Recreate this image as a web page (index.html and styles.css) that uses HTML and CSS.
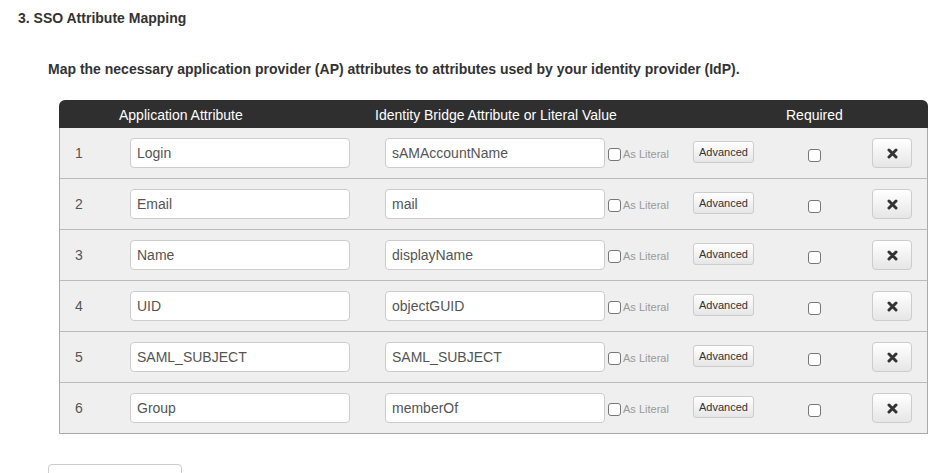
FILE: index.html
```html
<!DOCTYPE html>
<html lang="en">
<head>
  <meta charset="UTF-8">
  <title>SSO Attribute Mapping</title>
  <link rel="stylesheet" href="styles.css">
</head>
<body>
  <!-- Step 3 of the application setup wizard -->
  <h3 class="step-title">3. SSO Attribute Mapping</h3>

  <div class="step-body">
    <p class="intro">Map the necessary application provider (AP) attributes to attributes used by your identity provider (IdP).</p>

    <div class="mapping">
      <div class="mapping-head">
        <span>Application Attribute</span>
        <span>Identity Bridge Attribute or Literal Value</span>
        <span>Required</span>
      </div>

      <div class="mapping-row">
        <span class="num">1</span>
        <input class="field" type="text" value="Login">
        <input class="field" type="text" value="sAMAccountName">
        <label class="literal"><span class="box"></span>As Literal</label>
        <button class="btn-adv" type="button">Advanced</button>
        <span class="box req"></span>
        <button class="btn-del" type="button"><svg width="11" height="11" viewBox="0 0 11 11"><path d="M2 2 9 9M9 2 2 9" stroke="#333" stroke-width="3" stroke-linecap="round"/></svg></button>
      </div>

      <div class="mapping-row">
        <span class="num">2</span>
        <input class="field" type="text" value="Email">
        <input class="field" type="text" value="mail">
        <label class="literal"><span class="box"></span>As Literal</label>
        <button class="btn-adv" type="button">Advanced</button>
        <span class="box req"></span>
        <button class="btn-del" type="button"><svg width="11" height="11" viewBox="0 0 11 11"><path d="M2 2 9 9M9 2 2 9" stroke="#333" stroke-width="3" stroke-linecap="round"/></svg></button>
      </div>

      <div class="mapping-row">
        <span class="num">3</span>
        <input class="field" type="text" value="Name">
        <input class="field" type="text" value="displayName">
        <label class="literal"><span class="box"></span>As Literal</label>
        <button class="btn-adv" type="button">Advanced</button>
        <span class="box req"></span>
        <button class="btn-del" type="button"><svg width="11" height="11" viewBox="0 0 11 11"><path d="M2 2 9 9M9 2 2 9" stroke="#333" stroke-width="3" stroke-linecap="round"/></svg></button>
      </div>

      <div class="mapping-row">
        <span class="num">4</span>
        <input class="field" type="text" value="UID">
        <input class="field" type="text" value="objectGUID">
        <label class="literal"><span class="box"></span>As Literal</label>
        <button class="btn-adv" type="button">Advanced</button>
        <span class="box req"></span>
        <button class="btn-del" type="button"><svg width="11" height="11" viewBox="0 0 11 11"><path d="M2 2 9 9M9 2 2 9" stroke="#333" stroke-width="3" stroke-linecap="round"/></svg></button>
      </div>

      <div class="mapping-row">
        <span class="num">5</span>
        <input class="field" type="text" value="SAML_SUBJECT">
        <input class="field" type="text" value="SAML_SUBJECT">
        <label class="literal"><span class="box"></span>As Literal</label>
        <button class="btn-adv" type="button">Advanced</button>
        <span class="box req"></span>
        <button class="btn-del" type="button"><svg width="11" height="11" viewBox="0 0 11 11"><path d="M2 2 9 9M9 2 2 9" stroke="#333" stroke-width="3" stroke-linecap="round"/></svg></button>
      </div>

      <div class="mapping-row">
        <span class="num">6</span>
        <input class="field" type="text" value="Group">
        <input class="field" type="text" value="memberOf">
        <label class="literal"><span class="box"></span>As Literal</label>
        <button class="btn-adv" type="button">Advanced</button>
        <span class="box req"></span>
        <button class="btn-del" type="button"><svg width="11" height="11" viewBox="0 0 11 11"><path d="M2 2 9 9M9 2 2 9" stroke="#333" stroke-width="3" stroke-linecap="round"/></svg></button>
      </div>
    </div>

    <button class="btn-add" type="button" aria-label="Add attribute"></button>
  </div>
</body>
</html>
```

FILE: styles.css
```css
/* Wizard step: attribute mapping table */
body {
  font-family: 'Liberation Sans', Arial, sans-serif;
  color: #333;
  background: #fff;
  margin: 0;
  padding: 0;
}
.step-title {
  font-size: 14px;
  font-weight: bold;
  margin: 0;
  padding: 10px 0 0 18px;
  line-height: 16px;
}
.step-body {
  padding: 0 0 0 48px;
}
.intro {
  font-size: 14px;
  font-weight: bold;
  margin: 35px 0 0;
  line-height: 16px;
}
.mapping {
  margin: 23px 0 0 11px;
  width: 869px;
}
.mapping-head {
  display: grid;
  grid-template-columns: 60px 256px 411px 1fr;
  height: 28px;
  padding-top: 1px;
  box-sizing: border-box;
  align-items: center;
  background: #2f2f2f;
  color: #fff;
  font-size: 14px;
  border-radius: 6px 6px 0 0;
}
.mapping-head span:first-child {
  grid-column: 2;
}
.mapping-row {
  display: grid;
  grid-template-columns: 70px 255px 223px 85px 115px 64px 40px;
  align-items: center;
  height: 51px;
  box-sizing: border-box;
  background: #efefef;
  border: 1px solid #aaa;
  border-top: none;
  border-bottom-color: #bbb;
  font-size: 14px;
  color: #555;
}
.mapping-row:last-child {
  border-bottom-color: #aaa;
}
.num {
  padding-left: 15px;
}
.field {
  width: 220px;
  height: 30px;
  box-sizing: border-box;
  padding: 4px 6px;
  font-family: inherit;
  font-size: 14px;
  color: #555;
  background: #fff;
  border: 1px solid #ccc;
  border-radius: 4px;
  margin: 0;
}
.box {
  display: inline-block;
  width: 13px;
  height: 13px;
  box-sizing: border-box;
  border: 1px solid #777;
  border-radius: 3px;
  background: #fff;
}
.box.req {
  margin-top: 4px;
}
.literal {
  display: flex;
  align-items: center;
  gap: 2px;
  font-size: 11px;
  color: #999;
  margin-top: 2px;
}
.btn-adv {
  width: 61px;
  height: 22px;
  padding: 0;
  font-family: inherit;
  font-size: 11px;
  color: #333;
  background: linear-gradient(#fff, #e6e6e6);
  border: 1px solid #ccc;
  border-radius: 3px;
  margin-top: -2px;
}
.btn-del {
  width: 40px;
  height: 30px;
  padding: 0;
  display: flex;
  align-items: center;
  justify-content: center;
  background: linear-gradient(#fff, #e6e6e6);
  border: 1px solid #ccc;
  border-radius: 4px;
}
.btn-add {
  display: block;
  margin-top: 30px;
  width: 134px;
  height: 32px;
  background: #fff;
  border: 1px solid #ccc;
  border-radius: 4px;
}
```
